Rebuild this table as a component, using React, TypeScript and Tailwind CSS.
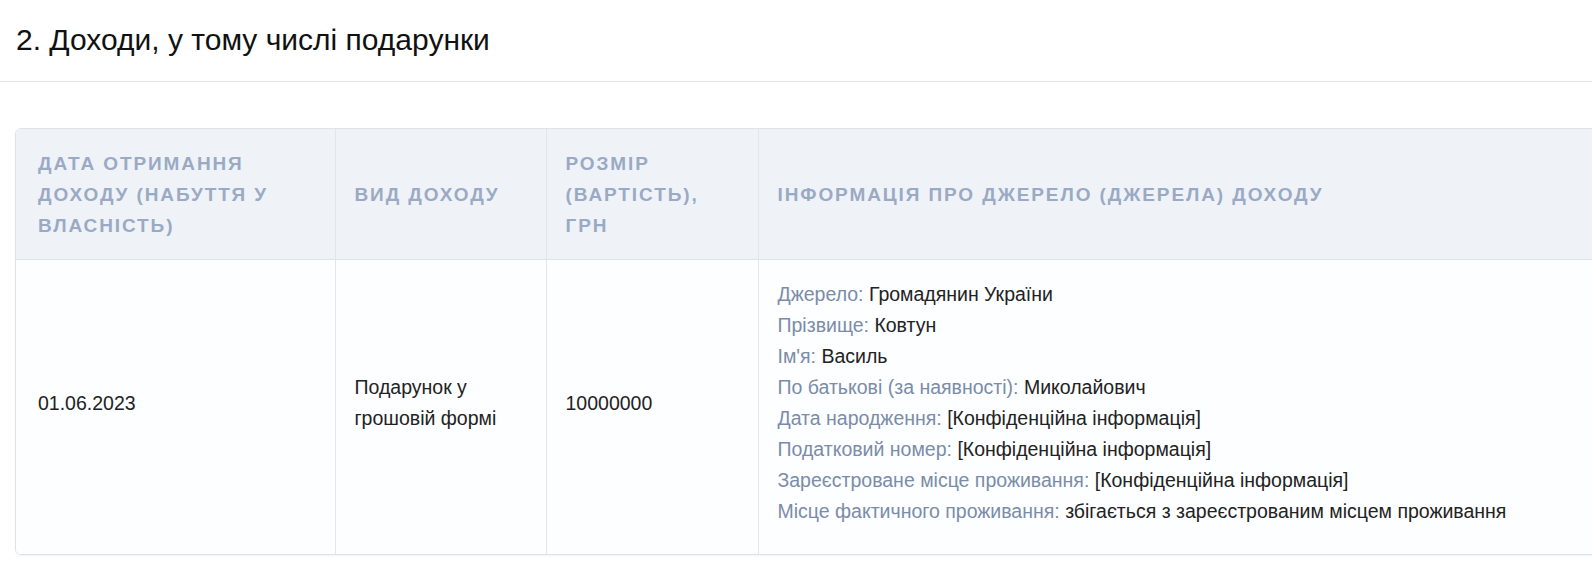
import React from "react";

const info = [
  { label: "Джерело:", value: "Громадянин України" },
  { label: "Прізвище:", value: "Ковтун" },
  { label: "Ім'я:", value: "Василь" },
  { label: "По батькові (за наявності):", value: "Миколайович" },
  { label: "Дата народження:", value: "[Конфіденційна інформація]" },
  { label: "Податковий номер:", value: "[Конфіденційна інформація]" },
  { label: "Зареєстроване місце проживання:", value: "[Конфіденційна інформація]" },
  {
    label: "Місце фактичного проживання:",
    value: "збігається з зареєстрованим місцем проживання",
  },
];

export default function App() {
  return (
    <div className="w-full min-h-screen overflow-hidden bg-white font-['Liberation_Sans',Arial,sans-serif]">
      {/* section title */}
      <div className="border-b border-[#e4e7eb] px-4 pt-[21px] pb-[22px]">
        <h2 className="text-[30px] leading-[38px] text-[#111]">
          2. Доходи, у тому числі подарунки
        </h2>
      </div>

      <div className="pt-[46px] pl-[15px]">
        <div className="w-[1660px] overflow-hidden rounded-md border border-[#dfe3e8] shadow-[0_1px_2px_rgba(0,0,0,0.05)]">
          <table className="w-full table-fixed border-collapse">
            <colgroup>
              <col className="w-[319px]" />
              <col className="w-[211px]" />
              <col className="w-[212px]" />
              <col />
            </colgroup>
            <thead>
              <tr className="border-b border-[#dde2e7] bg-[#eff3f8] text-left align-middle text-[19px] font-bold uppercase leading-[31px] tracking-[1.9px] text-[#9aaac4]">
                <th className="pl-[22px] pr-5 pt-[19px] pb-[18px] font-bold">
                  Дата отримання доходу (набуття у власність)
                </th>
                <th className="border-l border-[#e2e6ea] pl-[19px] pr-5 pt-[19px] pb-[18px] font-bold">
                  Вид доходу
                </th>
                <th className="border-l border-[#e2e6ea] pl-[19px] pr-5 pt-[19px] pb-[18px] font-bold">
                  Розмір (вартість), грн
                </th>
                <th className="border-l border-[#e2e6ea] pl-[19px] pr-5 pt-[19px] pb-[18px] font-bold">
                  Інформація про джерело (джерела) доходу
                </th>
              </tr>
            </thead>
            <tbody>
              <tr className="bg-[#fdfeff] align-middle text-[19.5px] leading-[31px] text-[#222]">
                <td className="pl-[22px] pr-5 pt-[19px] pb-[27px]">01.06.2023</td>
                <td className="border-l border-[#e2e6ea] pl-[19px] pr-5 pt-[19px] pb-[27px]">
                  Подарунок у грошовій формі
                </td>
                <td className="border-l border-[#e2e6ea] pl-[19px] pr-5 pt-[19px] pb-[27px]">
                  10000000
                </td>
                <td className="border-l border-[#e2e6ea] pl-[19px] pr-5 pt-[19px] pb-[27px]">
                  {info.map((row) => (
                    <div key={row.label}>
                      <span className="text-[#7a8ca8]">{row.label}</span> {row.value}
                    </div>
                  ))}
                </td>
              </tr>
            </tbody>
          </table>
        </div>
      </div>
    </div>
  );
}
